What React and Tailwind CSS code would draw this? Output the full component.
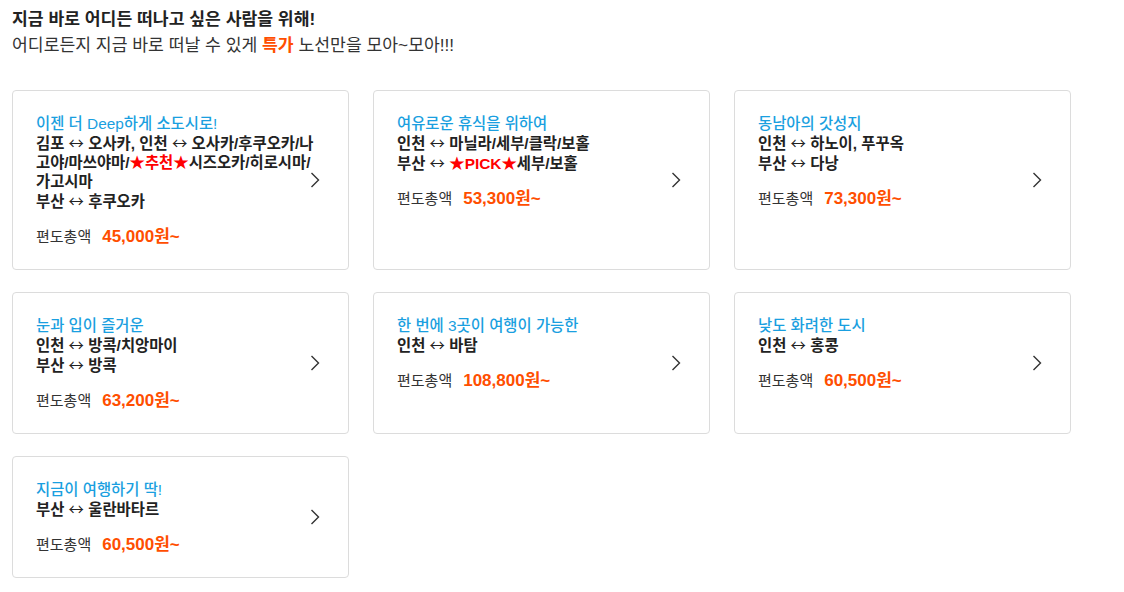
const FONT = { fontFamily: '"Liberation Sans", "Noto Sans CJK KR", sans-serif' };

const Star = ({ children }) => <span className="text-[#ff0000]">{children}</span>;
const Arrow = () => (
  <span className="font-normal" style={{ fontFamily: '"Noto Sans CJK KR", sans-serif' }}>↔</span>
);

const deals = [
  {
    title: '이젠 더 Deep하게 소도시로!',
    lines: [
      <>김포 <Arrow /> 오사카, 인천 <Arrow /> 오사카/후쿠오카/나</>,
      <>고야/마쓰야마/<Star>★추천★</Star>시즈오카/히로시마/</>,
      '가고시마',
      <>부산 <Arrow /> 후쿠오카</>,
    ],
    price: '45,000원~',
  },
  {
    title: '여유로운 휴식을 위하여',
    lines: [<>인천 <Arrow /> 마닐라/세부/클락/보홀</>, <>부산 <Arrow /> <Star>★PICK★</Star>세부/보홀</>],
    price: '53,300원~',
  },
  {
    title: '동남아의 갓성지',
    lines: [<>인천 <Arrow /> 하노이, 푸꾸옥</>, <>부산 <Arrow /> 다낭</>],
    price: '73,300원~',
  },
  {
    title: '눈과 입이 즐거운',
    lines: [<>인천 <Arrow /> 방콕/치앙마이</>, <>부산 <Arrow /> 방콕</>],
    price: '63,200원~',
  },
  {
    title: '한 번에 3곳이 여행이 가능한',
    lines: [<>인천 <Arrow /> 바탐</>],
    price: '108,800원~',
  },
  {
    title: '낮도 화려한 도시',
    lines: [<>인천 <Arrow /> 홍콩</>],
    price: '60,500원~',
  },
  {
    title: '지금이 여행하기 딱!',
    lines: [<>부산 <Arrow /> 울란바타르</>],
    price: '60,500원~',
  },
];

function Chevron() {
  return (
    <svg width="10" height="16" viewBox="0 0 10 16" fill="none" className="absolute right-[28px] top-1/2 -translate-y-1/2">
      <polyline points="1.5,1 8.5,8 1.5,15" stroke="#333" strokeWidth="1.4" />
    </svg>
  );
}

function DealCard({ deal }) {
  return (
    <div className="relative rounded-[4px] border border-[#dcdcdc] bg-white pl-[23px] pr-[30px] pt-[23px] pb-[21px]">
      <p className="text-[15.4px] font-medium leading-[19px] text-[#1a9fe0]">{deal.title}</p>
      {deal.lines.map((line, i) => (
        <p key={i} className="whitespace-nowrap text-[15.4px] font-bold leading-[19px] text-[#222]">
          {line}
        </p>
      ))}
      <div className="mt-[15px] flex items-center gap-[11px] leading-[22px]">
        <span className="text-[15px] text-[#333]">편도총액</span>
        <span className="text-[17px] font-bold text-[#ff4e00]">{deal.price}</span>
      </div>
      <Chevron />
    </div>
  );
}

export default function App() {
  return (
    <div className="min-h-[592px] bg-white px-3 pt-[6px]" style={FONT}>
      <h2 className="text-[17.2px] font-bold leading-[26px] text-[#222]">지금 바로 어디든 떠나고 싶은 사람을 위해!</h2>
      <p className="text-[17.2px] leading-[26px] text-[#333]">
        어디로든지 지금 바로 떠날 수 있게 <b className="text-[#ff4e00]">특가</b> 노선만을 모아~모아!!!
      </p>
      <div className="mt-[32px] grid w-[1059px] grid-cols-3 gap-x-6 gap-y-[22px]">
        {deals.map((deal, i) => (
          <DealCard key={i} deal={deal} />
        ))}
      </div>
    </div>
  );
}
